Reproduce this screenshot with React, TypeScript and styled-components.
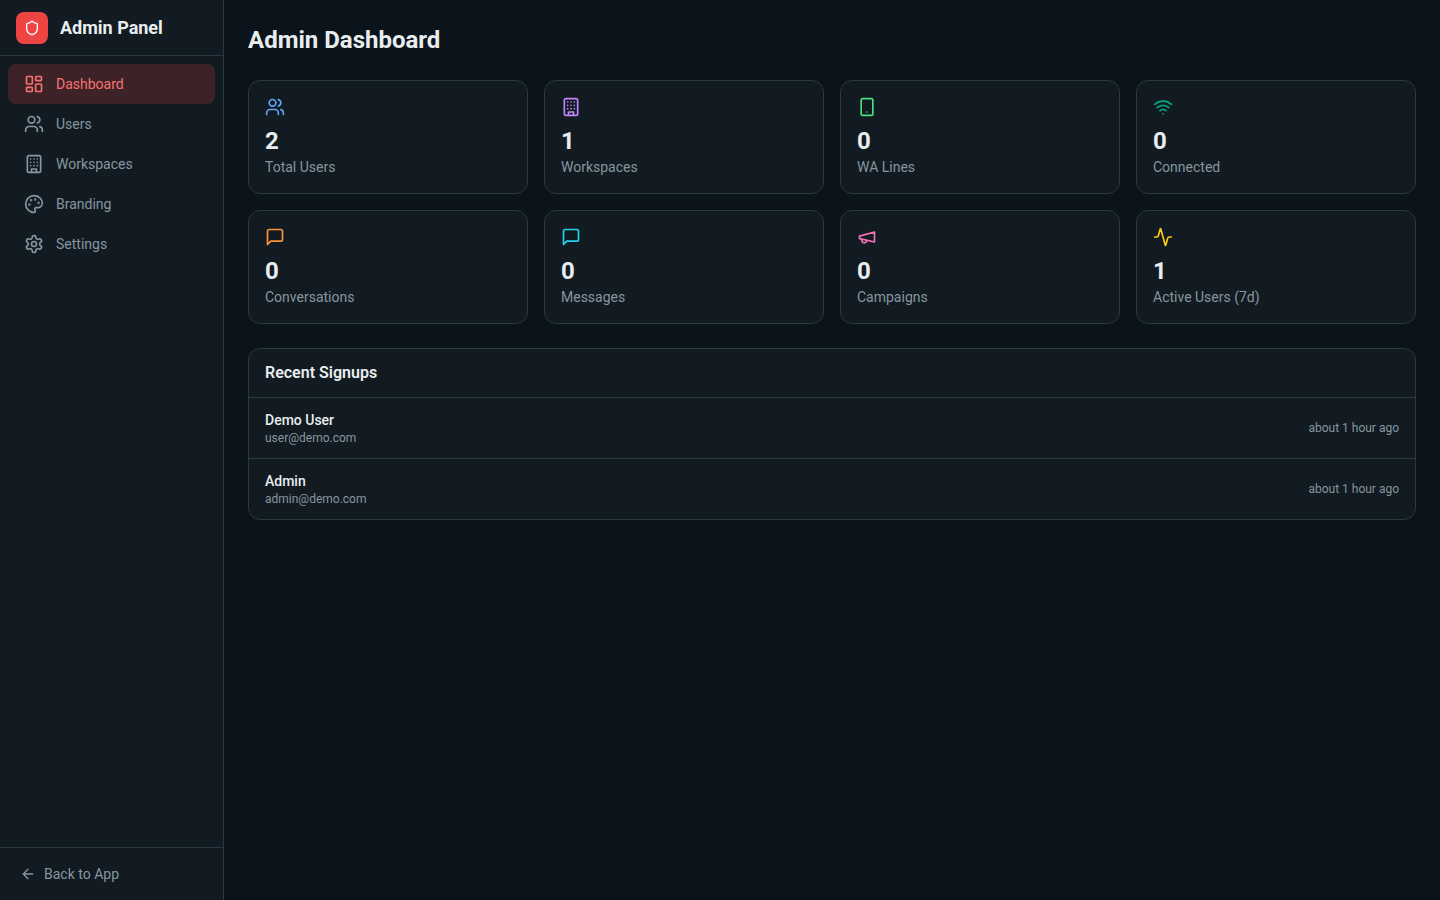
import React from "react";
import styled, { createGlobalStyle } from "styled-components";
import {
  Activity,
  ArrowLeft,
  LayoutDashboard,
  Shield,
  Smartphone,
  Users,
  Wifi,
} from "lucide-react";

const color = {
  page: "#0b141a",
  panel: "#111b21",
  border: "#2a3942",
  text: "#e9edef",
  muted: "#8696a0",
};

const GlobalStyle = createGlobalStyle`
  *, *::before, *::after { box-sizing: border-box; }
  body {
    margin: 0;
    background: ${color.page};
    color: ${color.text};
    font-family: Roboto, "Liberation Sans", sans-serif;
    font-size: 16px;
    line-height: 24px;
  }
  h1, h2, p, ul { margin: 0; padding: 0; }
  ul { list-style: none; }
  svg { display: block; flex-shrink: 0; }
`;

const Shell = styled.div`
  display: flex;
  min-height: 100vh;
`;

const Sidebar = styled.aside`
  display: flex;
  flex-direction: column;
  flex-shrink: 0;
  width: 224px;
  background: ${color.panel};
  border-right: 1px solid ${color.border};
`;

const Brand = styled.div`
  display: flex;
  align-items: center;
  gap: 12px;
  height: 56px;
  padding: 0 16px;
  border-bottom: 1px solid ${color.border};
`;

const BrandMark = styled.span`
  display: flex;
  align-items: center;
  justify-content: center;
  width: 32px;
  height: 32px;
  border-radius: 8px;
  background: #ef4444;
  color: #fff;
`;

const BrandName = styled.span`
  font-size: 18px;
  line-height: 28px;
  font-weight: 700;
`;

const Nav = styled.nav`
  flex: 1;
  padding: 8px;
`;

const NavLink = styled.a<{ $active?: boolean }>`
  display: flex;
  align-items: center;
  gap: 12px;
  height: 40px;
  padding: 0 16px;
  border-radius: 8px;
  font-size: 14px;
  line-height: 20px;
  text-decoration: none;
  color: ${(p) => (p.$active ? "#f87171" : color.muted)};
  background: ${(p) => (p.$active ? "rgba(239, 68, 68, 0.2)" : "transparent")};
`;

const SidebarFooter = styled.div`
  padding: 8px;
  border-top: 1px solid ${color.border};
`;

const BackLink = styled.a`
  display: flex;
  align-items: center;
  gap: 8px;
  height: 36px;
  padding: 0 12px;
  font-size: 14px;
  line-height: 20px;
  text-decoration: none;
  color: ${color.muted};
`;

const Main = styled.main`
  flex: 1;
  min-width: 0;
  padding: 24px;
`;

const PageTitle = styled.h1`
  font-size: 24px;
  line-height: 32px;
  font-weight: 700;
`;

const StatGrid = styled.div`
  display: grid;
  grid-template-columns: repeat(4, minmax(0, 1fr));
  gap: 16px;
  margin: 24px 0;
`;

const StatCard = styled.section<{ $tint: string }>`
  padding: 16px;
  border: 1px solid ${color.border};
  border-radius: 12px;
  background: ${color.panel};

  > svg {
    margin-bottom: 8px;
    color: ${(p) => p.$tint};
  }
`;

const StatValue = styled.p`
  font-size: 24px;
  line-height: 32px;
  font-weight: 700;
`;

const StatLabel = styled.p`
  font-size: 14px;
  line-height: 20px;
  color: ${color.muted};
`;

const Panel = styled.section`
  border: 1px solid ${color.border};
  border-radius: 12px;
  background: ${color.panel};
`;

const PanelTitle = styled.h2`
  padding: 12px 16px;
  font-size: 16px;
  line-height: 24px;
  font-weight: 600;
`;

const SignupRow = styled.li`
  display: flex;
  align-items: center;
  justify-content: space-between;
  padding: 12px 16px;
  border-top: 1px solid ${color.border};
`;

const SignupName = styled.p`
  font-size: 14px;
  line-height: 20px;
  font-weight: 500;
`;

const SmallText = styled.p`
  font-size: 12px;
  line-height: 16px;
  color: ${color.muted};
`;

const Glyph = styled.svg.attrs({
  width: 20,
  height: 20,
  viewBox: "0 0 24 24",
  fill: "none",
  stroke: "currentColor",
  strokeWidth: 2,
  strokeLinecap: "round",
  strokeLinejoin: "round",
  "aria-hidden": true,
})``;

const MessageIcon = () => (
  <Glyph>
    <path d="M21 15a2 2 0 0 1-2 2H7l-4 4V5a2 2 0 0 1 2-2h14a2 2 0 0 1 2 2z" />
  </Glyph>
);

const MegaphoneIcon = () => (
  <Glyph>
    <path d="m3 11 18-5v12L3 14v-3z" />
    <path d="M11.6 16.8a3 3 0 1 1-5.8-1.6" />
  </Glyph>
);

const BuildingIcon = () => (
  <Glyph>
    <rect width="16" height="20" x="4" y="2" rx="2" ry="2" />
    <path d="M9 22v-4h6v4" />
    <path d="M8 6h.01M16 6h.01M12 6h.01M12 10h.01M12 14h.01M16 10h.01M16 14h.01M8 10h.01M8 14h.01" />
  </Glyph>
);

const PaletteIcon = () => (
  <Glyph>
    <circle cx="13.5" cy="6.5" r=".5" fill="currentColor" />
    <circle cx="17.5" cy="10.5" r=".5" fill="currentColor" />
    <circle cx="8.5" cy="7.5" r=".5" fill="currentColor" />
    <circle cx="6.5" cy="12.5" r=".5" fill="currentColor" />
    <path d="M12 2C6.5 2 2 6.5 2 12s4.5 10 10 10c.926 0 1.648-.746 1.648-1.688 0-.437-.18-.835-.437-1.125-.29-.289-.438-.652-.438-1.125a1.64 1.64 0 0 1 1.668-1.668h1.996c3.051 0 5.555-2.503 5.555-5.554C21.965 6.012 17.461 2 12 2z" />
  </Glyph>
);

const SettingsIcon = () => (
  <Glyph>
    <path d="M12.22 2h-.44a2 2 0 0 0-2 2v.18a2 2 0 0 1-1 1.73l-.43.25a2 2 0 0 1-2 0l-.15-.08a2 2 0 0 0-2.73.73l-.22.38a2 2 0 0 0 .73 2.73l.15.1a2 2 0 0 1 1 1.72v.51a2 2 0 0 1-1 1.74l-.15.09a2 2 0 0 0-.73 2.73l.22.38a2 2 0 0 0 2.73.73l.15-.08a2 2 0 0 1 2 0l.43.25a2 2 0 0 1 1 1.73V20a2 2 0 0 0 2 2h.44a2 2 0 0 0 2-2v-.18a2 2 0 0 1 1-1.73l.43-.25a2 2 0 0 1 2 0l.15.08a2 2 0 0 0 2.73-.73l.22-.39a2 2 0 0 0-.73-2.73l-.15-.08a2 2 0 0 1-1-1.74v-.5a2 2 0 0 1 1-1.74l.15-.09a2 2 0 0 0 .73-2.73l-.22-.38a2 2 0 0 0-2.73-.73l-.15.08a2 2 0 0 1-2 0l-.43-.25a2 2 0 0 1-1-1.73V4a2 2 0 0 0-2-2z" />
    <circle cx="12" cy="12" r="3" />
  </Glyph>
);

const navItems = [
  { label: "Dashboard", icon: <LayoutDashboard size={20} />, active: true },
  { label: "Users", icon: <Users size={20} /> },
  { label: "Workspaces", icon: <BuildingIcon /> },
  { label: "Branding", icon: <PaletteIcon /> },
  { label: "Settings", icon: <SettingsIcon /> },
];

const stats = [
  { label: "Total Users", value: 2, tint: "#60a5fa", icon: <Users size={20} /> },
  { label: "Workspaces", value: 1, tint: "#c084fc", icon: <BuildingIcon /> },
  { label: "WA Lines", value: 0, tint: "#4ade80", icon: <Smartphone size={20} /> },
  { label: "Connected", value: 0, tint: "#00a884", icon: <Wifi size={20} /> },
  { label: "Conversations", value: 0, tint: "#fb923c", icon: <MessageIcon /> },
  { label: "Messages", value: 0, tint: "#22d3ee", icon: <MessageIcon /> },
  { label: "Campaigns", value: 0, tint: "#f472b6", icon: <MegaphoneIcon /> },
  { label: "Active Users (7d)", value: 1, tint: "#facc15", icon: <Activity size={20} /> },
];

const signups = [
  { name: "Demo User", email: "user@demo.com", when: "about 1 hour ago" },
  { name: "Admin", email: "admin@demo.com", when: "about 1 hour ago" },
];

export default function App() {
  return (
    <>
      <GlobalStyle />
      <Shell>
        <Sidebar>
          <Brand>
            <BrandMark>
              <Shield size={16} />
            </BrandMark>
            <BrandName>Admin Panel</BrandName>
          </Brand>
          <Nav aria-label="Admin">
            {navItems.map((item) => (
              <NavLink
                key={item.label}
                href="#"
                $active={item.active}
                aria-current={item.active ? "page" : undefined}
              >
                {item.icon}
                {item.label}
              </NavLink>
            ))}
          </Nav>
          <SidebarFooter>
            <BackLink href="#">
              <ArrowLeft size={16} />
              Back to App
            </BackLink>
          </SidebarFooter>
        </Sidebar>
        <Main>
          <PageTitle>Admin Dashboard</PageTitle>
          <StatGrid>
            {stats.map((stat) => (
              <StatCard key={stat.label} $tint={stat.tint}>
                {stat.icon}
                <StatValue>{stat.value}</StatValue>
                <StatLabel>{stat.label}</StatLabel>
              </StatCard>
            ))}
          </StatGrid>
          <Panel>
            <PanelTitle>Recent Signups</PanelTitle>
            <ul>
              {signups.map((signup) => (
                <SignupRow key={signup.email}>
                  <div>
                    <SignupName>{signup.name}</SignupName>
                    <SmallText>{signup.email}</SmallText>
                  </div>
                  <SmallText>{signup.when}</SmallText>
                </SignupRow>
              ))}
            </ul>
          </Panel>
        </Main>
      </Shell>
    </>
  );
}
